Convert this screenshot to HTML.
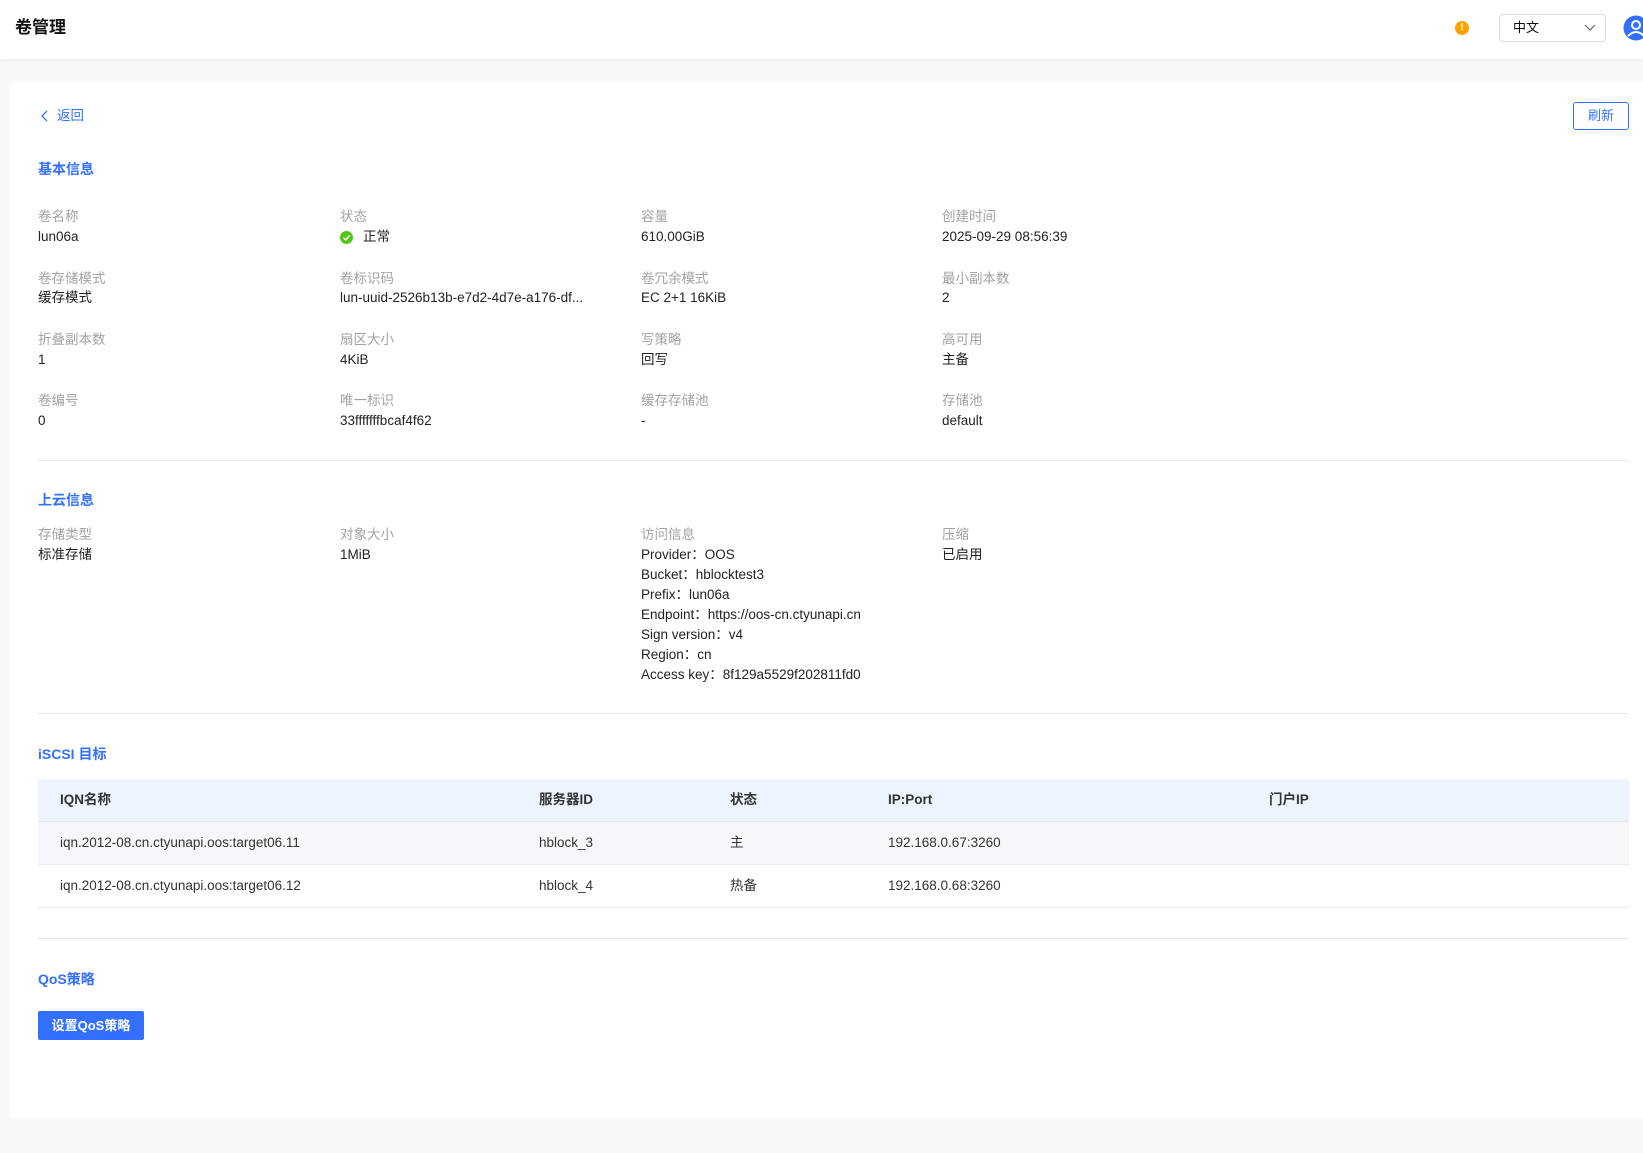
<!DOCTYPE html>
<html><head><meta charset="utf-8">
<style>
*{margin:0;padding:0;box-sizing:border-box}
body{width:1643px;height:1153px;background:#f8f8f8;font-family:"Liberation Sans","Noto Sans CJK SC",sans-serif;font-size:13.5px;color:#222;position:relative;overflow:hidden}
.a{position:absolute;white-space:nowrap;line-height:20px}
.hdr{position:absolute;left:0;top:0;width:1643px;height:59px;background:#fff;box-shadow:0 1px 4px rgba(0,0,0,.06)}
.card{position:absolute;left:9px;top:81px;width:1650px;height:1038px;background:#fff;border-radius:6px}
.lb{color:#a3a3a3}
.ti{color:#3370ff;font-weight:bold;font-size:14px}
.hr{position:absolute;left:38px;width:1591px;height:1px;background:#e8e8e8}
.th{font-weight:bold;color:#333}
</style></head><body>
<div class="hdr"></div>
<div class="a" style="left:15px;top:17px;font-size:17px;font-weight:bold;line-height:22px;color:#111">卷管理</div>
<div class="a" style="left:1455px;top:21px;width:14px;height:14px;border-radius:50%;background:#ffa200;color:#fff;font-size:10px;line-height:14px;text-align:center;font-weight:bold">!</div>
<div class="a" style="left:1499px;top:14px;width:107px;height:28px;border:1px solid #dcdcdc;border-radius:4px;background:#fff"></div>
<div class="a" style="left:1513px;top:18px;font-size:13px;color:#111">中文</div>
<svg class="a" style="left:1584px;top:23px" width="12" height="10"><path d="M1 2 L6 7 L11 2" fill="none" stroke="#666" stroke-width="1.2"/></svg>
<svg class="a" style="left:1623px;top:15px" width="24" height="26"><circle cx="13" cy="13" r="12.5" fill="#3370ff"/><circle cx="13" cy="10" r="4" fill="none" stroke="#fff" stroke-width="2"/><path d="M5 21 Q13 13 21 21" fill="none" stroke="#fff" stroke-width="2"/></svg>
<div class="card"></div>
<svg class="a" style="left:40px;top:110px" width="10" height="12"><path d="M7 1 L2 6 L7 11" fill="none" stroke="#3370ff" stroke-width="1.3"/></svg>
<div class="a" style="left:57px;top:106px;color:#3370ff">返回</div>
<div class="a" style="left:1573px;top:102px;width:56px;height:28px;border:1px solid #3370ff;border-radius:3px;color:#3370ff;text-align:center;line-height:26px;font-size:13px">刷新</div>
<div class="a ti" style="left:38px;top:159px">基本信息</div>

<div class="a lb" style="left:38px;top:207px">卷名称</div><div class="a" style="left:38px;top:227px">lun06a</div>
<div class="a lb" style="left:340px;top:207px">状态</div>
<svg class="a" style="left:340px;top:231px" width="13" height="13"><circle cx="6.5" cy="6.5" r="6.5" fill="#52c41a"/><path d="M3.5 6.8 L5.8 9 L9.5 4.5" fill="none" stroke="#fff" stroke-width="1.4"/></svg>
<div class="a" style="left:363px;top:227px">正常</div>
<div class="a lb" style="left:641px;top:207px">容量</div><div class="a" style="left:641px;top:227px">610.00GiB</div>
<div class="a lb" style="left:942px;top:207px">创建时间</div><div class="a" style="left:942px;top:227px">2025-09-29 08:56:39</div>

<div class="a lb" style="left:38px;top:269px">卷存储模式</div><div class="a" style="left:38px;top:288px">缓存模式</div>
<div class="a lb" style="left:340px;top:269px">卷标识码</div><div class="a" style="left:340px;top:288px">lun-uuid-2526b13b-e7d2-4d7e-a176-df...</div>
<div class="a lb" style="left:641px;top:269px">卷冗余模式</div><div class="a" style="left:641px;top:288px">EC 2+1 16KiB</div>
<div class="a lb" style="left:942px;top:269px">最小副本数</div><div class="a" style="left:942px;top:288px">2</div>

<div class="a lb" style="left:38px;top:330px">折叠副本数</div><div class="a" style="left:38px;top:350px">1</div>
<div class="a lb" style="left:340px;top:330px">扇区大小</div><div class="a" style="left:340px;top:350px">4KiB</div>
<div class="a lb" style="left:641px;top:330px">写策略</div><div class="a" style="left:641px;top:350px">回写</div>
<div class="a lb" style="left:942px;top:330px">高可用</div><div class="a" style="left:942px;top:350px">主备</div>

<div class="a lb" style="left:38px;top:391px">卷编号</div><div class="a" style="left:38px;top:411px">0</div>
<div class="a lb" style="left:340px;top:391px">唯一标识</div><div class="a" style="left:340px;top:411px">33fffffffbcaf4f62</div>
<div class="a lb" style="left:641px;top:391px">缓存存储池</div><div class="a" style="left:641px;top:411px">-</div>
<div class="a lb" style="left:942px;top:391px">存储池</div><div class="a" style="left:942px;top:411px">default</div>

<div class="hr" style="top:460px"></div>
<div class="a ti" style="left:38px;top:490px">上云信息</div>
<div class="a lb" style="left:38px;top:525px">存储类型</div><div class="a" style="left:38px;top:545px">标准存储</div>
<div class="a lb" style="left:340px;top:525px">对象大小</div><div class="a" style="left:340px;top:545px">1MiB</div>
<div class="a lb" style="left:641px;top:525px">访问信息</div>
<div class="a" style="left:641px;top:545px;line-height:20px">Provider：OOS<br>Bucket：hblocktest3<br>Prefix：lun06a<br>Endpoint：https://oos-cn.ctyunapi.cn<br>Sign version：v4<br>Region：cn<br>Access key：8f129a5529f202811fd0</div>
<div class="a lb" style="left:942px;top:525px">压缩</div><div class="a" style="left:942px;top:545px">已启用</div>

<div class="hr" style="top:713px"></div>
<div class="a ti" style="left:38px;top:744px">iSCSI 目标</div>
<div class="a" style="left:38px;top:779px;width:1591px;height:43px;background:#edf4fd;border-bottom:1px solid #e6ebf2"></div>
<div class="a" style="left:38px;top:822px;width:1591px;height:43px;background:#f5f7fa;border-bottom:1px solid #e6ebf2"></div>
<div class="a" style="left:38px;top:865px;width:1591px;height:43px;background:#fff;border-bottom:1px solid #e6ebf2"></div>
<div class="a th" style="left:60px;top:790px">IQN名称</div>
<div class="a th" style="left:539px;top:790px">服务器ID</div>
<div class="a th" style="left:730px;top:790px">状态</div>
<div class="a th" style="left:888px;top:790px">IP:Port</div>
<div class="a th" style="left:1269px;top:790px">门户IP</div>
<div class="a" style="left:60px;top:833px;color:#333">iqn.2012-08.cn.ctyunapi.oos:target06.11</div>
<div class="a" style="left:539px;top:833px;color:#333">hblock_3</div>
<div class="a" style="left:730px;top:833px;color:#333">主</div>
<div class="a" style="left:888px;top:833px;color:#333">192.168.0.67:3260</div>
<div class="a" style="left:60px;top:876px;color:#333">iqn.2012-08.cn.ctyunapi.oos:target06.12</div>
<div class="a" style="left:539px;top:876px;color:#333">hblock_4</div>
<div class="a" style="left:730px;top:876px;color:#333">热备</div>
<div class="a" style="left:888px;top:876px;color:#333">192.168.0.68:3260</div>

<div class="hr" style="top:938px"></div>
<div class="a ti" style="left:38px;top:969px">QoS策略</div>
<div class="a" style="left:38px;top:1011px;width:106px;height:29px;background:#3370ff;border-radius:2px;color:#fff;font-weight:bold;font-size:13px;text-align:center;line-height:29px">设置QoS策略</div>
</body></html>
